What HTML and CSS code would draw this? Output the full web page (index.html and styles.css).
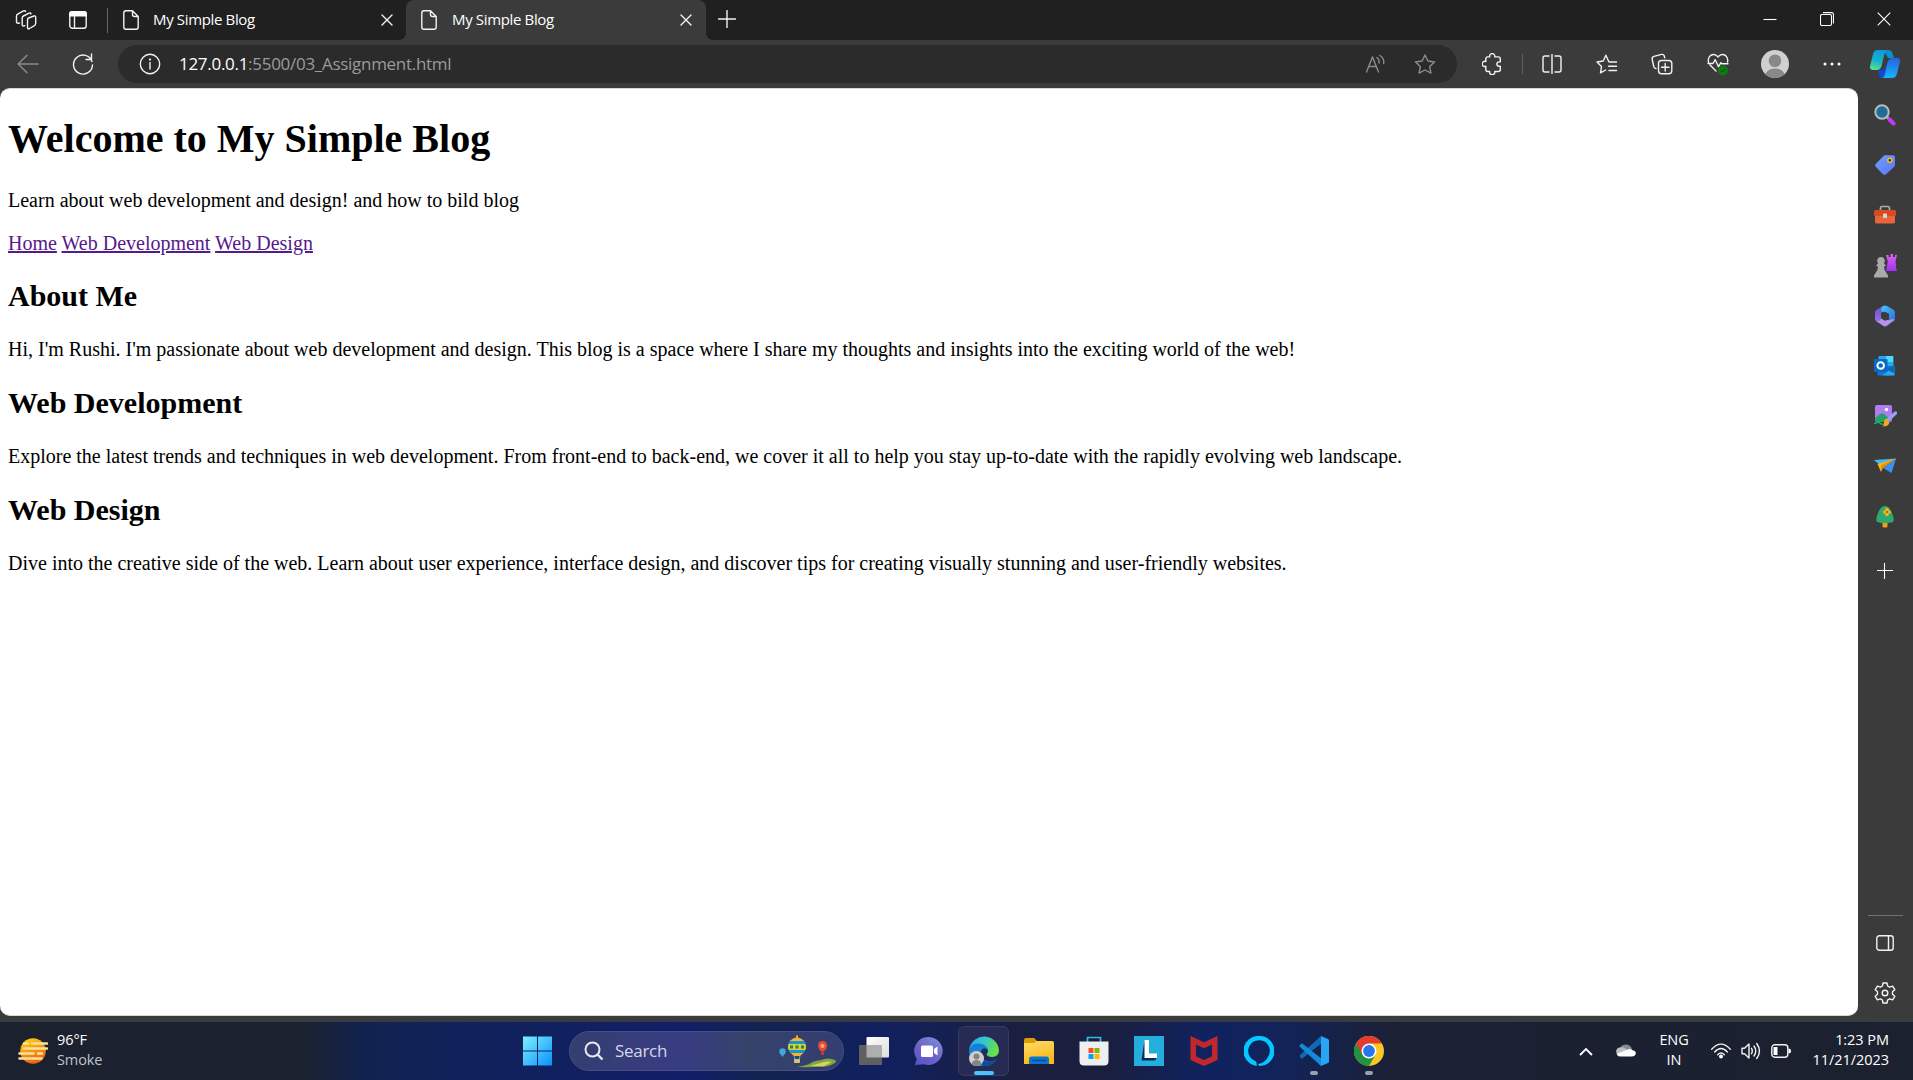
FILE: index.html
```html
<!DOCTYPE html>
<html lang="en">
<head>
<meta charset="utf-8">
<title>My Simple Blog</title>
<link rel="stylesheet" href="styles.css">
</head>
<body>
<div class="desktop">
  <div class="tabstrip">
    <div class="cell workspaces"><svg width="22" height="22" viewBox="0 0 22 22" class="line"><path d="M13.500 8.600 19 6.600q1.700-.5 1.700 1.200v6.400q0 1.400-1.300 2l-4.900 2.900q-2 1-2-1v-7.500q0-1.500 1-2zM9.800 16.300l-1 .3q-1.600.3-1.600-1.300V8.600q0-1.400 1.200-2l5.700-2.900q1.300-.6 1.900.8M4.500 13.600l-1.300.3Q1.500 14 1.500 12.500V6.700q0-1.300 1.200-2L8.500 1.500q1.500-.7 2.200.6" transform="translate(0 .4)"/></svg></div>
    <div class="cell tabactions"><svg width="18" height="18" viewBox="0 0 18 18"><rect x=".8" y=".8" width="16.400" height="16.400" rx="2.500" class="line"/><path d="M0 5.500V3q0-3 3-3h12q3 0 3 3v2.500z" fill="#fff"/><path d="M5.500 5v12" class="line"/></svg></div>
    <div class="strip-divider"></div>
    <div class="tab">
      <svg class="file" width="16" height="20" viewBox="0 0 16 20"><path class="line" d="M3 .8h6.500L15.200 6.500V17q0 2.200-2.200 2.200H3Q.8 19.200.8 17V3Q.8.800 3 .8zM9.500 1v3.500q0 2 2 2H15"/></svg>
      <span class="tab-title">My Simple Blog</span>
      <svg class="x" width="12" height="12" viewBox="0 0 12 12"><path class="line" d="m1 1 10 10M11 1 1 11"/></svg>
    </div>
    <div class="tab active">
      <svg class="file" width="16" height="20" viewBox="0 0 16 20"><path class="line" d="M3 .8h6.500L15.200 6.500V17q0 2.200-2.200 2.200H3Q.8 19.200.8 17V3Q.8.800 3 .8zM9.500 1v3.500q0 2 2 2H15"/></svg>
      <span class="tab-title">My Simple Blog</span>
      <svg class="x" width="12" height="12" viewBox="0 0 12 12"><path class="line" d="m1 1 10 10M11 1 1 11"/></svg>
    </div>
    <svg class="newtab" width="18" height="18" viewBox="0 0 18 18"><path class="line" d="M9 .5v17M.5 9h17"/></svg>
    <div class="window-buttons">
      <svg width="14" height="14" viewBox="0 0 14 14"><path class="thin" d="M.5 7.500h13"/></svg>
      <svg width="14" height="14" viewBox="0 0 14 14"><rect class="thin" x=".5" y="2.500" width="11" height="11" rx="1.500"/><path class="thin" d="M3 .6h8.500q2 0 2 2V11.500"/></svg>
      <svg width="14" height="14" viewBox="0 0 14 14"><path class="thin" d="m.7.700 12.600 12.600M13.300.7.700 13.300"/></svg>
    </div>
  </div>

  <div class="toolbar">
    <div class="cell back"><svg width="22" height="20" viewBox="0 0 22 20"><path class="line dim" d="M21 10H1.500M10 1.200 1.200 10l8.800 8.800"/></svg></div>
    <div class="cell reload"><svg width="22" height="22" viewBox="0 0 22 22"><path class="line" d="M20 8.500A9.500 9.500 0 1 0 20.500 12M19.500 1v5.500H14"/></svg></div>
    <div class="address">
      <svg width="22" height="22" viewBox="0 0 22 22"><circle class="line" cx="11" cy="11" r="9.700"/><path class="line" d="M11 9.500v6.500"/><circle cx="11" cy="6.500" r="1.100" fill="#fff"/></svg>
      <span class="url"><b>127.0.0.1</b>:5500/03_Assignment.html</span>
      <svg class="read" width="22" height="20" viewBox="0 0 22 20"><path class="line dim" d="M2.500 18 8.500 3l6 15M4.800 12.500h7.400M13 3.500q2.500 2 2.200 5.500M16 1.500q4.500 3 3.700 8"/></svg>
      <svg class="star" width="22" height="20" viewBox="0 0 22 20"><path class="line dim" d="m11 1 2.900 6 6.600 1-4.800 4.600 1.200 6.500-5.900-3.100-5.900 3.100 1.200-6.500L1.500 8l6.600-1z"/></svg>
    </div>
    <div class="cell puzzle"><svg width="20" height="22" viewBox="0 0 20 22"><path class="line" d="M6.500 4.200h1.200a2.600 2.600 0 1 1 5 0h3.600q2 0 2 2v3h-1.200a2.200 2.200 0 1 0 0 4.400h1.200v3.200q0 2-2 2h-3.600a2.600 2.600 0 1 1-5 0H5.600q-1.800 0-1.800-2v-3.200a2.600 2.600 0 1 1 0-4.800V6.200q0-2 2-2z" transform="translate(0 -.3)"/></svg></div>
    <div class="tool-divider"></div>
    <div class="cell split"><svg width="20" height="20" viewBox="0 0 20 20"><path class="line" d="M7 2H3Q1 2 1 4v12q0 2 2 2h4M13 2h4q2 0 2 2v12q0 2-2 2h-4M10 0v20"/></svg></div>
    <div class="cell favs"><svg width="22" height="20" viewBox="0 0 22 20"><path class="line" d="m12.500 7-2.600-5.800L7.200 7l-6.200 1 4.500 4.500-1 6.300 5.200-2.800M14 8h6.500M12.500 12.300h8M13 16.500h7.500M12.500 7.500 14 8"/></svg></div>
    <div class="cell collections"><svg width="22" height="22" viewBox="0 0 22 22"><rect class="line" x="7.500" y="7.500" width="13.300" height="13.300" rx="3"/><path class="line" d="M14.200 10.500v7.500M10.500 14.200h7.500M5 15.500q-1.800 0-2.200-1.800L1.200 6.500Q.8 4 3 3.400l7.500-2q2.200-.4 2.800 1.600l.4 1.800"/></svg></div>
    <div class="cell health"><svg width="22" height="23" viewBox="0 0 22 23"><path class="line" d="M1.500 9Q.5 5 3.300 2.700 7 .2 10 3l1 1 1-1q3-2.800 6.700-.3Q21.500 5 20.500 9M3 12l6 6M1 10.500h5l2.200-3.800 3.300 7 2.400-4 1 1H21"/><circle cx="16" cy="17.500" r="5" fill="#107c10"/><path d="m13.800 17.500 1.500 1.500 3-3" fill="none" stroke="#07490a"/></svg></div>
    <div class="cell avatar"><svg width="28" height="28" viewBox="0 0 28 28"><clipPath id="av"><circle cx="14" cy="14" r="14"/></clipPath><g clip-path="url(#av)"><path fill="#d2d0ce" d="M0 0h28v28H0z"/><circle cx="14" cy="10.700" r="6.300" fill="#8a8886"/><ellipse cx="14" cy="27" rx="10.500" ry="8.500" fill="#8a8886"/></g></svg></div>
    <div class="cell more"><svg width="18" height="4" viewBox="0 0 18 4"><g fill="#fff"><circle cx="2" cy="2" r="1.500"/><circle cx="9" cy="2" r="1.500"/><circle cx="16" cy="2" r="1.500"/></g></svg></div>
    <div class="cell copilot"><svg width="30" height="28" viewBox="0 0 30 28"><defs><linearGradient id="c1" x1=".5" y1="0" x2=".3" y2="1"><stop stop-color="#0a9bdc"/><stop offset=".55" stop-color="#18b3c8"/><stop offset="1" stop-color="#5fe08c"/></linearGradient><linearGradient id="c2" x1=".5" y1="0" x2=".4" y2="1"><stop stop-color="#2764e0"/><stop offset="1" stop-color="#16b5fa"/></linearGradient></defs><path d="M8 20h6l3-7 3 1-4 11q-1.200 3-4.500 3Q9 28 8 20z" fill="#1747d1"/><path d="M13 0h5.500Q22 0 23 5l1 3h-6z" fill="#0c8fd0"/><path d="M7.500 0H18q-2.500 0-3.500 4l-3 12q-1 4-5 4H3q-4 0-2.700-5L3 4Q4 0 7.500 0z" fill="url(#c1)"/><path d="M22 8h5.300q3.500 0 2.500 4.500L27 23.500Q26 28 22 28H11.500q2.500 0 3.500-4l2.700-12Q18.700 8 22 8z" fill="url(#c2)"/></svg></div>
  </div>

  <div class="middle">
    <main class="page">
      <h1>Welcome to My Simple Blog</h1>
      <p>Learn about web development and design! and how to bild blog</p>
      <nav><a href="#">Home</a> <a href="#development">Web Development</a> <a href="#design">Web Design</a></nav>
      <h2>About Me</h2>
      <p>Hi, I'm Rushi. I'm passionate about web development and design. This blog is a space where I share my thoughts and insights into the exciting world of the web!</p>
      <h2 id="development">Web Development</h2>
      <p>Explore the latest trends and techniques in web development. From front-end to back-end, we cover it all to help you stay up-to-date with the rapidly evolving web landscape.</p>
      <h2 id="design">Web Design</h2>
      <p>Dive into the creative side of the web. Learn about user experience, interface design, and discover tips for creating visually stunning and user-friendly websites.</p>
    </main>
    <aside class="sidebar">
      <div class="side-item"><svg width="22" height="22" viewBox="0 0 22 22"><path d="m13 13 2.500 2.500" stroke="#aaa" stroke-width="2.500"/><path d="m15.500 15.500 4 4" stroke="#c03bf0" stroke-width="4" stroke-linecap="round"/><circle cx="8" cy="8" r="6.700" fill="#1c6e96" stroke="#b9b9b9" stroke-width="2"/></svg></div>
      <div class="side-item"><svg width="22" height="22" viewBox="0 0 22 22"><defs><linearGradient id="tg" x2="1" y2="1"><stop stop-color="#6ea1ff"/><stop offset="1" stop-color="#5f72f5"/></linearGradient></defs><path d="M11 1.300h8q2 0 2 2V11q0 1-.8 1.700L12 20.200q-1.500 1.500-3 0l-7.300-7.400q-1.400-1.300 0-2.800L9.500 2q.7-.7 1.500-.7z" fill="url(#tg)"/><circle cx="15.800" cy="6.300" r="2" fill="#224" stroke="#f7c600" stroke-width="1.500"/></svg></div>
      <div class="side-item"><svg width="24" height="20" viewBox="0 0 24 20"><path d="M7.500 5V3q0-1.500 1.500-1.500h6q1.500 0 1.500 1.500v2" fill="none" stroke="#aaa" stroke-width="1.700"/><rect x="2" y="9" width="20" height="9.500" rx="1.500" fill="#e8643c"/><rect x="1" y="5" width="22" height="6" rx="1.500" fill="#d94a1e"/><rect x="10" y="8.500" width="4" height="4.500" rx=".8" fill="#d5d5d5"/></svg></div>
      <div class="side-item"><svg width="24" height="24" viewBox="0 0 24 24"><defs><linearGradient id="rk" y2="1" x2="0"><stop stop-color="#dc65ef"/><stop offset="1" stop-color="#9d32f3"/></linearGradient></defs><path d="M13 1h2.500v2h2V0H20v3h2V1h2l-1.500 6.500.8 7.500 1 2H13l1.800-9.500z" fill="url(#rk)"/><path d="M8 3a4 4 0 0 1 3 6.500l2 2-2 1.200q0 4 2.500 6.300l1.500 2.500V23.500H1V21.500L2.500 19Q5 16.700 5 12.700l-2-1.200 2-2A4 4 0 0 1 8 3z" fill="#aaa"/></svg></div>
      <div class="side-item"><svg width="22" height="22" viewBox="0 0 22 22"><defs><linearGradient id="m1" x2="1" y2="1"><stop stop-color="#36d0ff"/><stop offset="1" stop-color="#3b62d8"/></linearGradient><linearGradient id="m2" y2="1" x2="0"><stop stop-color="#6b4fc6"/><stop offset="1" stop-color="#8a74e6"/></linearGradient></defs><path d="M9.500.8 2.200 5Q1 5.800 1 7.500v6.800q0 1.500 1.500 1.700 3.800.2 4.500-3.500V8L12 5z" fill="url(#m2)"/><path d="M9 1q2-1.200 4 0l6.500 3.800Q21 5.700 21 7.500V14q0 2-2 3l-4-2.500V9L7 6q0-3.800 2-5z" fill="url(#m1)"/><path d="M2 16q4 .5 5-3l3.500 2.500 5-.8 4.500-.7q0 1.700-1.500 2.500L13 20.800q-2 1.200-4 0z" fill="#b690ee"/><path d="M7.500 9 11 6.800 15 9v4.500L11 15.500l-3.500-2z" fill="#3b3b3b"/></svg></div>
      <div class="side-item"><svg width="22" height="22" viewBox="0 0 22 22"><rect x="4.500" y="1" width="15" height="11" rx="1" fill="#28a8ea"/><path d="M12 1h7v6h-7z" fill="#50d9ff"/><path d="M3.500 11h17v8.500q0 1-1 1h-15q-1 0-1-1z" fill="#0f78d4"/><path d="m20.500 11-12 9.500h11q1 0 1-1z" fill="#28a8ea"/><path d="m12 14 8.500-3.500v8z" fill="#1066b5"/><rect x="0" y="4" width="13.500" height="13" rx="1.300" fill="#0a69c4"/><circle cx="6.700" cy="10.500" r="3.300" fill="none" stroke="#fff" stroke-width="1.900"/></svg></div>
      <div class="side-item"><svg width="24" height="24" viewBox="0 0 24 24"><rect x="2" y="1" width="17" height="17" rx="2" fill="#b07cf3"/><path d="m2 14 5-4q2-1.500 4 0l7 6-1 2H4q-2 0-2-2z" fill="#21a366"/><circle cx="13.500" cy="5.500" r="1.700" fill="#fff"/><path d="M1 20q4-3 6-1t4 1" fill="none" stroke="#22ad72" stroke-width="1.500"/><path d="m14 17 8.500-8" stroke="#9b9df8" stroke-width="3.500" stroke-linecap="round"/><path d="m13 14.500 3.500 3.500q-.5 4.500-7 4.500 2-2 1.500-4 0-2.500 2-4z" fill="#f9a51d"/></svg></div>
      <div class="side-item"><svg width="23" height="18" viewBox="0 0 23 18"><path d="M0 3 22 1.500 7 9z" fill="#47b8f5"/><path d="M22 1.500 17.500 16 9 11z" fill="#3c91f0"/><path d="m3.500 7 18.500-5.500L8.500 10 7 15z" fill="#fbb51e"/><path d="m7 8 15-6.500L9 11l-2 4z" fill="#e89306"/></svg></div>
      <div class="side-item"><svg width="20" height="24" viewBox="0 0 20 24"><path d="M7.500 15h5v6q0 1.500-1.300 1.500H8.800q-1.300 0-1.300-1.500z" fill="#f3a018"/><path d="M10 1Q14 1 16.500 7q3 6 2 9-.7 2-8.500 2t-8.500-2q-1-3 2-9Q6 1 10 1z" fill="#2da970"/><g fill="#f9b516"><circle cx="12" cy="4.500" r="1.800"/><circle cx="9.800" cy="7" r="1.800"/><circle cx="14.300" cy="7" r="1.800"/><circle cx="12" cy="9.400" r="1.800"/></g><circle cx="12" cy="7" r="1.200" fill="#b96a08"/></svg></div>
      <div class="side-item plus"><svg width="16" height="16" viewBox="0 0 16 16"><path class="thin" d="M7.500 0v16M0 7.500h16"/></svg></div>
      <div class="side-bottom">
        <div class="side-divider"></div>
        <div class="side-item"><svg width="18" height="16" viewBox="0 0 18 16"><rect class="line" x=".8" y=".8" width="16.400" height="14.400" rx="2.500"/><path class="line" d="M12.500 1v14"/></svg></div>
        <div class="side-item"><svg width="22" height="22" viewBox="0 0 22 22"><path class="line" d="m9 1-.6 3-2 1.200-3-1L1.200 7.700l2.300 2v2.600l-2.300 2 2.200 3.500 3-1 2 1.200.6 3h4l.6-3 2-1.200 3 1 2.200-3.500-2.300-2V9.700l2.300-2-2.200-3.500-3 1-2-1.200-.6-3z"/><circle class="line" cx="11" cy="11" r="2.800"/></svg></div>
      </div>
    </aside>
  </div>

  <footer class="taskbar">
    <div class="weather">
      <svg width="30" height="28" viewBox="0 0 30 28"><defs><linearGradient id="sun" x1=".2" x2=".6" y2="1"><stop stop-color="#ffd009"/><stop offset="1" stop-color="#ec6210"/></linearGradient></defs><circle cx="15" cy="14" r="12.800" fill="url(#sun)"/><path d="M6 6.500h4M14 6.500h15M6 11.500h23M1.500 16.500h14M20 16.500h4M1.500 21.500h22" stroke="#f8e0a0" stroke-width="2.600" stroke-linecap="round"/></svg>
      <div class="two-lines"><span>96°F</span><span class="muted">Smoke</span></div>
    </div>
    <div class="apps">
      <div class="app"><svg width="30" height="30" viewBox="0 0 30 30"><defs><linearGradient id="w" x2="1" y2="1"><stop stop-color="#7df0ff"/><stop offset="1" stop-color="#0a91fb"/></linearGradient></defs><path d="M0 0h14v14H0zM15 0h14v14H15zM0 15h14v14H0zM15 15h14v14H15z" transform="translate(0 .5)" fill="url(#w)"/></svg></div>
      <div class="search">
        <svg width="20" height="20" viewBox="0 0 20 20"><circle cx="8.500" cy="8.500" r="7" fill="none" stroke="#e6e8f2" stroke-width="2"/><path d="m13.500 13.500 5 5" stroke="#e6e8f2" stroke-width="2.400"/></svg>
        <span>Search</span>
        <svg class="balloons" width="60" height="34" viewBox="0 0 60 34"><circle cx="4.500" cy="17.500" r="3.200" fill="#3ca9df"/><path d="m2.500 20 2 3 2-3z" fill="#3ca9df"/><clipPath id="bl"><path d="M19 3.500a9 9.500 0 0 1 9 9.500q0 4-6 9h-6q-6-5-6-9a9 9.500 0 0 1 9-9.500z"/></clipPath><path d="M19 1.500v3" stroke="#e3b34b" stroke-width="2"/><g clip-path="url(#bl)"><path fill="#f5b52a" d="M8 2h22v22H8z"/><path fill="#1992d8" d="M8 7h22v3H8zM8 16h22v3H8z"/><path fill="#c4d548" d="M8 10h22v6H8z"/><path d="M12 13h3M17.500 13h3M23 13h3" stroke="#477b2b" stroke-width="3"/></g><path d="m16 22 1 4M22 22l-1 4" stroke="#3bb4e8"/><rect x="16" y="25" width="6" height="4" rx="1" fill="#d7c469"/><path d="M19 33q11-2 14-4t10-3q7-3 14 0 3 1-2 4-4 3-14 2.500-8 1-22 .5z" fill="#7ca843"/><path d="m32 32 14-4q5-1 8 0l-9 4.500z" fill="#dfcf61"/><path d="M44.500 7q4.500 0 4.500 5 0 3-3 5.500h-3Q40 15 40 12q0-5 4.500-5z" fill="#e7483b"/><circle cx="44.500" cy="12" r="2" fill="#f6b63e"/><path d="M43 18h3v3h-3z" fill="#bf3a35"/></svg>
      </div>
      <div class="app"><svg width="30" height="28" viewBox="0 0 30 28"><defs><linearGradient id="tv" x2="1" y2="1"><stop stop-color="#fff"/><stop offset="1" stop-color="#ddd"/></linearGradient></defs><rect x="7.500" width="22.500" height="20.500" rx="1" fill="url(#tv)"/><rect y="8" width="23" height="20" rx="1" fill="#606060"/><path d="M7.500 8H23v12.500H7.500z" fill="#aeaeae"/></svg></div>
      <div class="app"><svg width="30" height="30" viewBox="0 0 30 30"><defs><linearGradient id="ch" x1=".9" x2=".2" y2="1"><stop stop-color="#7891dd"/><stop offset=".5" stop-color="#7167c6"/><stop offset="1" stop-color="#5a54c9"/></linearGradient></defs><path d="M15 1a14 14 0 1 1-5 27.200L.8 29l2-6A14 14 0 0 1 15 1z" fill="url(#ch)"/><rect x="7" y="9.500" width="12" height="11.500" rx="1.500" fill="#fff"/><path d="m20 13 3.500-2.500v9L20 17z" fill="#fff"/></svg></div>
      <div class="app current"><svg width="30" height="30" viewBox="0 0 30 30"><defs><linearGradient id="e1" x2="1" y2=".3"><stop stop-color="#28a8e9"/><stop offset=".5" stop-color="#33c5d3"/><stop offset="1" stop-color="#68e047"/></linearGradient><linearGradient id="e2" x2=".4" y2="1"><stop stop-color="#137bd2"/><stop offset="1" stop-color="#1592e5"/></linearGradient></defs><path d="M.5 12A15 15 0 0 1 30 14q0 7-7 7-5 0-5.500-3 1.500-1 1.500-3 0-5-7-5-8 0-11.500 6z" fill="url(#e1)"/><path d="M0 16q1-8.500 9-8.500 9 0 10 7-3-4-6-1-4 7 4 11.500 6 2 10.500-1.500A15 15 0 0 1 0 16z" fill="url(#e2)"/><path d="M12 14q-3 8 5 11.500 6 1.500 11-3Q23 31 14 30 6 26 9 18z" fill="#0b4d9d"/><circle cx="7.500" cy="22.500" r="7.500" fill="#d1cfcd"/><circle cx="7.500" cy="20.500" r="3" fill="#868482"/><path d="M2.500 28q1-4 5-4t5 4q-5 4-10 0z" fill="#868482"/></svg></div>
      <div class="app"><svg width="30" height="28" viewBox="0 0 30 28"><defs><linearGradient id="fo" y2="1" x2=".3"><stop stop-color="#ffdc65"/><stop offset="1" stop-color="#fbb81d"/></linearGradient></defs><path d="M0 3q0-2 2-2h8l3 3v4H0z" fill="#de9c05"/><path d="M0 6h10l3-2h15q2 0 2 2v21H0z" fill="url(#fo)"/><path d="M5 27v-5q0-2.500 2.500-2.500h15Q25 19.500 25 22v5z" fill="#0b75cf"/><path d="M8 23.500h14" stroke="#074991" stroke-width="1.200"/></svg></div>
      <div class="app"><svg width="30" height="30" viewBox="0 0 30 30"><path d="M8.500 6V1.500h13V6" fill="none" stroke="#29bdef" stroke-width="1.700"/><path d="M.5 5.500h29V25q0 4.500-4.500 4.500H5Q.5 29.500.5 25z" fill="#efefef"/><path fill="#f25022" d="M9.500 12h5v5h-5z"/><path fill="#7fba00" d="M15.500 12h5v5h-5z"/><path fill="#00a4ef" d="M9.500 18h5v5h-5z"/><path fill="#ffb900" d="M15.500 18h5v5h-5z"/></svg></div>
      <div class="app"><svg width="30" height="30" viewBox="0 0 30 30"><path fill="#24aedb" d="M0 0h30v30H0z"/><path d="m10.500 4-3 20.500H21l2-3-11-1z" fill="#0b2c5e"/><path d="M10.500 4h4.500v13.500h8V22H10.500z" fill="#fff"/></svg></div>
      <div class="app"><svg width="30" height="30" viewBox="0 0 30 30"><path fill="#c0282d" fill-rule="evenodd" d="M1.500 0 15 6.200 28.500 0v24L15 30 1.500 24zM7 8.500v11.800l8 3.700 8-3.700V8.500l-8 3.700z"/></svg></div>
      <div class="app"><svg width="30" height="30" viewBox="0 0 30 30"><path fill="#00caff" fill-rule="evenodd" d="M15 0a15 15 0 0 1 1 30q-2.200-1-2-2 7-1 10-7a10.800 10.800 0 1 0-13 4q1.500.5 1.500 1.500l.3 3.400A15 15 0 0 1 15 0z"/></svg></div>
      <div class="app running"><svg width="30" height="30" viewBox="0 0 30 30"><path d="m1 21 2 1.800 19-15V0L1 19q-1 1 0 2z" fill="#0f69b4"/><path d="m1 9 2-1.800 19 15V30L1 11q-1-1 0-2z" fill="#138bd8"/><path d="m22 0 7 3q1 .5 1 1.500v21q0 1-1 1.500l-7 3z" fill="#28a5f3"/></svg></div>
      <div class="app running"><svg width="30" height="30" viewBox="0 0 30 30"><circle cx="15" cy="15" r="15" fill="#fcc625"/><path d="M15 15 2 7.500A15 15 0 0 0 15 30l6.500-11.300z" fill="#229342"/><path d="M2 7.500A15 15 0 0 1 28 7.500H15v7.500l-6.500 3.700z" fill="#e33b2e"/><circle cx="15" cy="15" r="7.500" fill="#fff"/><circle cx="15" cy="15" r="5.900" fill="#2878ec"/></svg></div>
    </div>
    <div class="tray">
      <svg class="chevron" width="14" height="9" viewBox="0 0 14 9"><path d="m1 8 6-6 6 6" fill="none" stroke="#fff" stroke-width="1.800"/></svg>
      <svg class="cloud" width="20" height="14" viewBox="0 0 20 14"><path d="M4 6a6 5.500 0 0 1 11.500-1l2 6H4z" fill="#858a90"/><path d="M1 11.500Q-1.500 6 3.500 4.500 8 3.500 10 6l6 6H4q-2 0-3-.5z" fill="#bdc0c4"/><path d="M.8 11 11 6.700q3-1.700 5 .3 5 1 3.500 4.500-1 2-3.500 2H4q-2.500 0-3.200-2.500z" fill="#fff"/></svg>
      <div class="two-lines lang"><span>ENG</span><span>IN</span></div>
      <svg class="wifi" width="20" height="16" viewBox="0 0 20 16"><path class="line" d="M.7 6.200Q10-4 19.300 6.200M3.700 9Q10 2 16.300 9M6.700 11.700q3.300-3.400 6.600 0"/><circle cx="10" cy="13.500" r="2" fill="#fff"/></svg>
      <svg class="sound" width="20" height="18" viewBox="0 0 20 18"><path class="line" d="M1 6.300h2.500L8 2v14l-4.500-4.300H1zM10.500 6.300q1.600 2.700 0 5.400M13 4q3.500 5 0 10M15.700 1.500q5.500 7.500 0 15"/></svg>
      <svg class="battery" width="20" height="14" viewBox="0 0 20 14"><rect class="line" x=".8" y=".8" width="16" height="12.400" rx="3"/><path d="M2.500 3h4v8h-4zM17.500 4.500q2.500 0 2.500 2.500t-2.500 2.500z" fill="#fff"/></svg>
      <div class="two-lines clock"><span>1:23 PM</span><span>11/21/2023</span></div>
    </div>
  </footer>
</div>
</body>
</html>
```
FILE: styles.css
```css
* { box-sizing: border-box; }
body { margin: 0; overflow: hidden; font-family: "Open Sans", "Noto Sans", sans-serif; font-size: 14px; color: #fff; }
svg { display: block; flex: none; }
.desktop { width: 1913px; height: 1080px; display: flex; flex-direction: column; background: #3b3b3b; }
.line { fill: none; stroke: #f2f2f2; stroke-width: 1.4; stroke-linejoin: round; stroke-linecap: round; }
.thin { fill: none; stroke: #fff; stroke-width: 1.1; }
.dim { stroke: #8c8c8c; }
.cell { width: 44px; display: flex; align-items: center; justify-content: center; flex: none; }

.tabstrip { height: 40px; flex: none; display: flex; align-items: stretch; background: #202020; }
.workspaces { width: 51px; }
.tabactions { width: 54px; }
.strip-divider { width: 1px; height: 25px; margin: 8px 0 0 2px; background: #666; }
.tab { width: 298px; display: flex; align-items: center; padding: 0 13px 0 15px; }
.tab-title { margin: -2px auto 0 14px; font-size: 15px; letter-spacing: -.35px; white-space: nowrap; }
.tab.active { position: relative; width: 300px; background: #3b3b3b; border-radius: 8px 8px 0 0; padding: 0 14px 0 15px; }
.tab.active .tab-title { margin-left: 15px; }
.tab.active::before, .tab.active::after { content: ""; position: absolute; bottom: 0; width: 6px; height: 6px; }
.tab.active::before { left: -6px; background: radial-gradient(circle at 0 0, #202020 5.500px, #3b3b3b 6px); }
.tab.active::after { right: -6px; background: radial-gradient(circle at 100% 0, #202020 5.500px, #3b3b3b 6px); }
.newtab { margin: 10px 0 0 12px; }
.window-buttons { display: flex; gap: 43px; margin: 12px 22px 0 auto; }

.toolbar { height: 48px; flex: none; display: flex; align-items: center; }
.back { width: 56px; }
.reload { width: 54px; }
.address { width: 1339px; height: 38px; margin-left: 8px; border-radius: 19px; background: #2b2b2b; display: flex; align-items: center; padding: 0 21px 0 21px; }
.url { margin: -1px auto 0 18px; font-size: 17px; letter-spacing: -.29px; color: #9a9a9a; white-space: nowrap; }
.url b { font-weight: 400; color: #fff; }
.star { margin-left: 28px; }
.puzzle { margin-left: 13px; }
.tool-divider { width: 1px; height: 20px; margin: 0 7px 0 8px; background: #606060; }
.favs, .collections { margin-left: 11px; }
.health { margin-left: 12px; }
.avatar, .more { margin-left: 13px; }
.copilot { margin-left: 9px; }

.middle { height: 928px; flex: none; display: flex; }
.page { width: 1858px; height: 928px; padding: 0 8px; background: #fff; border: solid #d8d8d8; border-width: 1px 0; border-radius: 10px; color: #000; font: 20px/23px "Liberation Serif", serif; overflow: hidden; }
h1 { margin: 27px 0; font-size: 40px; line-height: 46px; }
h2 { margin: 25px 0; font-size: 30px; line-height: 34px; }
nav + h2 { margin-top: 24px; }
p { margin: 20px 0; }
a { color: #551a8b; text-decoration: underline; }

.sidebar { width: 55px; display: flex; flex-direction: column; padding: 2px 1px 0 0; }
.side-item { height: 50.200px; flex: none; display: flex; align-items: center; justify-content: center; }
.plus { padding-top: 8px; }
.side-bottom { margin-top: auto; margin-bottom: -2px; }
.side-divider { width: 35px; height: 1px; margin: 0 auto 2px 10px; background: #737373; }

.taskbar { height: 59px; margin-top: 5px; flex: none; display: flex; align-items: center; position: relative; border-top: 1px solid #343a4b; background: linear-gradient(90deg, #1c212e 0, #1b2230 16%, #12224f 19%, #10225a 24%, #11205f 29%, #121e68 36%, #12234f 40%, #11205f 46%, #1a1f40 53%, #1a1f40 58%, #10225f 63%, #12235a 67%, #1b2033 73%, #1b212e 100%); }
.weather { width: 510px; display: flex; align-items: center; gap: 9px; padding-left: 18px; }
.two-lines { display: flex; flex-direction: column; line-height: 20px; font-size: 14.500px; letter-spacing: -.1px; margin-top: -2px; }
.muted { color: #bfc3ca; }
.apps { display: flex; align-items: center; padding-bottom: 1px; }
.app { width: 55px; height: 50px; display: flex; align-items: center; justify-content: center; position: relative; }
.current::before { content: ""; position: absolute; inset: 0 2px; border: 1px solid #363b61; border-radius: 6px; background: #272b54; }
.current svg { position: relative; }
.current::after, .running::after { content: ""; position: absolute; bottom: 1px; left: 18px; width: 20px; height: 4px; border-radius: 2px; background: #4cc2ff; }
.running::after { left: 24px; width: 8px; background: #9b9eab; }
.search { width: 275px; height: 40px; margin: 0 2px 0 4px; padding: 0 5px 0 14px; border: 1px solid #474f82; border-radius: 20px; background: linear-gradient(90deg, #343e70, #383c82 40%, #35436b 65%, #343d70); display: flex; align-items: center; color: #d5d8e6; font-size: 17px; }
.search span { margin: -1px auto 0 11px; letter-spacing: -.3px; }
.tray { margin-left: auto; padding-right: 24px; display: flex; align-items: center; }
.cloud { margin: -3px 0 0 23px; }
.lang { width: 48px; margin-left: 14px; align-items: center; }
.wifi { margin-left: 13px; }
.sound { margin-left: 10px; }
.battery { margin-left: 10px; }
.clock { width: 98px; align-items: flex-end; letter-spacing: -.05px; }
```
